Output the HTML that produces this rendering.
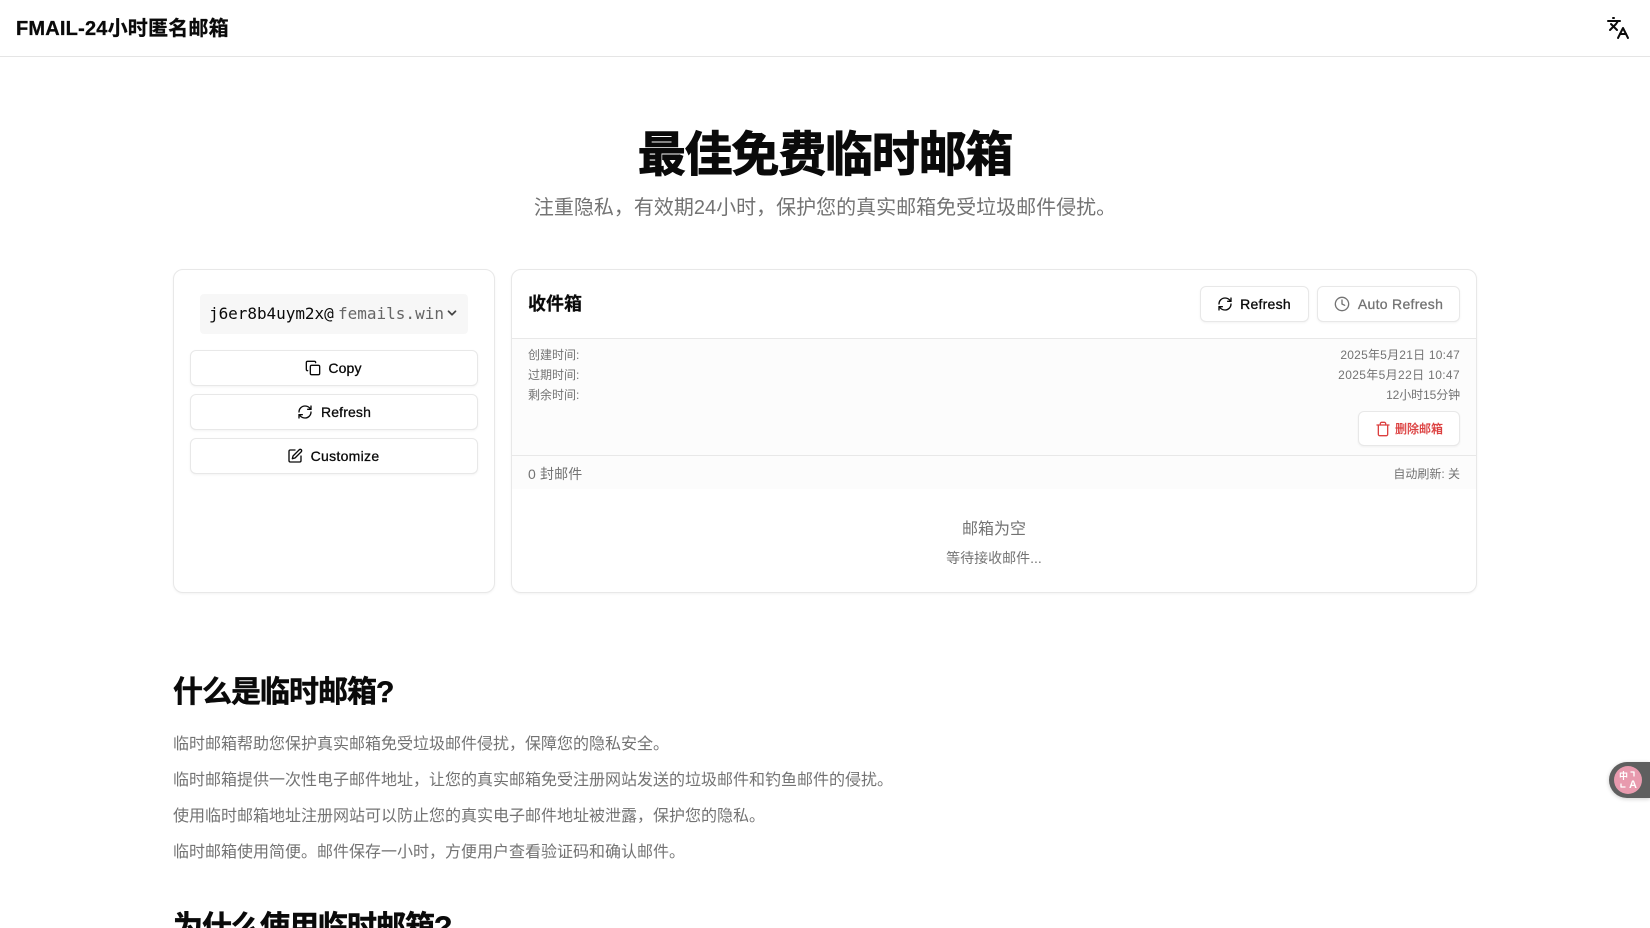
<!DOCTYPE html>
<html lang="zh"><head><meta charset="utf-8"><title>FMAIL</title>
<style>
*{box-sizing:border-box;margin:0;padding:0}
html,body{width:1650px;height:928px;overflow:hidden;background:#fff}
body{font-family:"Liberation Sans","Noto Sans CJK SC",sans-serif;color:#0a0a0a;position:relative}
.a{position:absolute;white-space:nowrap}
svg{display:block;fill:none;stroke:currentColor;stroke-width:2;stroke-linecap:round;stroke-linejoin:round}
.btn{position:absolute;background:#fff;border:1px solid #e8e8e8;border-radius:6px;box-shadow:0 1px 2px rgba(0,0,0,.05);display:flex;align-items:center;justify-content:center;gap:8px;font-size:14px;font-weight:500;color:#0a0a0a;white-space:nowrap;letter-spacing:.15px;-webkit-text-stroke:.3px currentColor}
.card{position:absolute;background:#fff;border:1px solid #e8e8e8;border-radius:10px;box-shadow:0 1px 2px rgba(0,0,0,.05)}
.g{color:#737373}
p.a{font-size:16px;line-height:24px;color:#737373}
h2.a{font-size:30px;line-height:36px;font-weight:700;letter-spacing:-1px;color:#0a0a0a;-webkit-text-stroke:.5px #0a0a0a}
.s{font-size:12px;line-height:20px;color:#737373}
</style></head><body>

<div class="a" style="left:0;top:0;width:1650px;height:57px;border-bottom:1px solid #e5e5e5"></div>
<div class="a" style="left:16px;top:15px;font-size:20px;line-height:28px;font-weight:700;letter-spacing:.2px;-webkit-text-stroke:.3px #0a0a0a">FMAIL-24小时匿名邮箱</div>
<svg class="a" style="left:1606px;top:16px" width="24" height="24" viewBox="0 0 24 24"><path d="m5 8 6 6"/><path d="m4 14 6-6 2-3"/><path d="M2 5h12"/><path d="M7 2h1"/><path d="m22 22-5-10-5 10"/><path d="M14 18h6"/></svg>

<h1 class="a" style="left:0;width:1650px;top:126px;text-align:center;font-size:48px;line-height:60px;font-weight:700;letter-spacing:-1.2px;-webkit-text-stroke:.9px #0a0a0a">最佳免费临时邮箱</h1>
<div class="a g" style="left:0;width:1650px;top:194px;text-align:center;font-size:20px;line-height:28px">注重隐私，有效期24小时，保护您的真实邮箱免受垃圾邮件侵扰。</div>

<div class="card" style="left:173px;top:269px;width:322px;height:324px"></div>
<div class="a" style="left:200px;top:294px;width:268px;height:40px;background:#f7f7f7;border-radius:4px"></div>
<div class="a" style="left:209px;top:303px;font-family:'DejaVu Sans Mono',monospace;font-size:16px;line-height:22px;letter-spacing:-.04px">j6er8b4uym2x@</div>
<div class="a" style="left:338px;top:303px;font-family:'DejaVu Sans Mono',monospace;font-size:16px;line-height:22px;color:#666">femails.win</div>
<svg class="a" style="left:445px;top:306px;color:#444" width="14" height="14" viewBox="0 0 24 24"><path d="m6 9 6 6 6-6" stroke-width="3"/></svg>

<div class="btn" style="left:190px;top:350px;width:288px;height:36px;gap:7px"><svg style="margin-left:-1px" width="16" height="16" viewBox="0 0 24 24"><rect x="8" y="8" width="14" height="14" rx="2"/><path d="M4 16c-1.100 0-2-.9-2-2V4c0-1.100.9-2 2-2h10c1.100 0 2 .9 2 2"/></svg>Copy</div>
<div class="btn" style="left:190px;top:394px;width:288px;height:36px;padding-left:1px"><svg style="margin-left:-1px" width="16" height="16" viewBox="0 0 24 24"><path d="M3 12a9 9 0 0 1 9-9 9.750 9.750 0 0 1 6.740 2.740L21 8"/><path d="M21 3v5h-5"/><path d="M21 12a9 9 0 0 1-9 9 9.750 9.750 0 0 1-6.740-2.740L3 16"/><path d="M8 16H3v5"/></svg>Refresh</div>
<div class="btn" style="left:190px;top:438px;width:288px;height:36px;letter-spacing:.3px"><svg style="margin-left:-2px" width="16" height="16" viewBox="0 0 24 24"><path d="M12 3H5a2 2 0 0 0-2 2v14a2 2 0 0 0 2 2h14a2 2 0 0 0 2-2v-7"/><path d="M18.400 2.600a2.100 2.100 0 1 1 3 3L12 15l-4 1 1-4Z"/></svg>Customize</div>

<div class="card" style="left:511px;top:269px;width:966px;height:324px;overflow:hidden">
  <div class="a" style="left:0;top:68px;width:964px;height:117px;background:#fcfcfc;border-top:1px solid #e8e8e8"></div>
  <div class="a" style="left:0;top:185px;width:964px;height:34px;background:#fcfcfc;border-top:1px solid #e8e8e8"></div>
</div>
<div class="a" style="left:528px;top:291px;font-size:18px;line-height:26px;font-weight:700;-webkit-text-stroke:.2px #0a0a0a">收件箱</div>
<div class="btn" style="left:1200px;top:286px;width:109px;height:36px;gap:7px;letter-spacing:.25px"><svg style="margin-left:-1px" width="16" height="16" viewBox="0 0 24 24"><path d="M3 12a9 9 0 0 1 9-9 9.750 9.750 0 0 1 6.740 2.740L21 8"/><path d="M21 3v5h-5"/><path d="M21 12a9 9 0 0 1-9 9 9.750 9.750 0 0 1-6.740-2.740L3 16"/><path d="M8 16H3v5"/></svg>Refresh</div>
<div class="btn" style="left:1317px;top:286px;width:143px;height:36px;color:#737373;letter-spacing:.3px;padding-left:1px"><svg style="margin-left:-1px" width="16" height="16" viewBox="0 0 24 24"><circle cx="12" cy="12" r="10"/><path d="M12 6v6l4 2"/></svg>Auto Refresh</div>

<div class="a s" style="left:528px;top:345px">创建时间:</div>
<div class="a s" style="left:528px;top:365px">过期时间:</div>
<div class="a s" style="left:528px;top:385px">剩余时间:</div>
<div class="a s" style="right:190px;top:345px;letter-spacing:.22px">2025年5月21日 10:47</div>
<div class="a s" style="right:190px;top:365px;letter-spacing:.36px">2025年5月22日 10:47</div>
<div class="a s" style="right:190px;top:385px;letter-spacing:-.1px">12小时15分钟</div>
<div class="btn" style="left:1358px;top:411px;width:102px;height:35px;color:#dc4040;font-size:12px;gap:4px;letter-spacing:0;-webkit-text-stroke:.15px currentColor"><svg width="16" height="16" viewBox="0 0 24 24"><path d="M3 6h18"/><path d="M19 6v14c0 1-1 2-2 2H7c-1 0-2-1-2-2V6"/><path d="M8 6V4c0-1 1-2 2-2h4c1 0 2 1 2 2v2"/></svg>删除邮箱</div>
<div class="a g" style="left:528px;top:464px;font-size:14px;line-height:20px;letter-spacing:.15px">0 封邮件</div>
<div class="a s" style="right:190px;top:464px">自动刷新: 关</div>
<div class="a g" style="left:512px;width:964px;top:518px;text-align:center;font-size:16px;line-height:24px">邮箱为空</div>
<div class="a g" style="left:512px;width:964px;top:548px;text-align:center;font-size:14px;line-height:20px">等待接收邮件...</div>

<h2 class="a" style="left:173px;top:675px">什么是临时邮箱?</h2>
<p class="a" style="left:173px;top:733px">临时邮箱帮助您保护真实邮箱免受垃圾邮件侵扰，保障您的隐私安全。</p>
<p class="a" style="left:173px;top:769px">临时邮箱提供一次性电子邮件地址，让您的真实邮箱免受注册网站发送的垃圾邮件和钓鱼邮件的侵扰。</p>
<p class="a" style="left:173px;top:805px">使用临时邮箱地址注册网站可以防止您的真实电子邮件地址被泄露，保护您的隐私。</p>
<p class="a" style="left:173px;top:841px">临时邮箱使用简便。邮件保存一小时，方便用户查看验证码和确认邮件。</p>
<h2 class="a" style="left:173px;top:910px">为什么使用临时邮箱?</h2>

<div class="a" style="left:1609px;top:762px;width:41px;height:36px;background:#5f5f5f;border-radius:18px 0 0 18px;box-shadow:0 1px 4px rgba(0,0,0,.2)"></div>
<div class="a" style="left:1614px;top:766px;width:28px;height:28px;border-radius:50%;background:#e89aae"></div>
<div class="a" style="left:1619px;top:771px;color:#fff;font-size:9px;line-height:10px;font-weight:700">中</div>
<div class="a" style="left:1629px;top:780px;color:#fff;font-size:11px;line-height:11px;font-weight:700">A</div>
<svg class="a" style="left:1614px;top:766px;color:#fff" width="28" height="28" viewBox="0 0 28 28"><path d="M17 6h3v4M7 18v3h4" stroke-width="1.300"/></svg>
</body></html>
